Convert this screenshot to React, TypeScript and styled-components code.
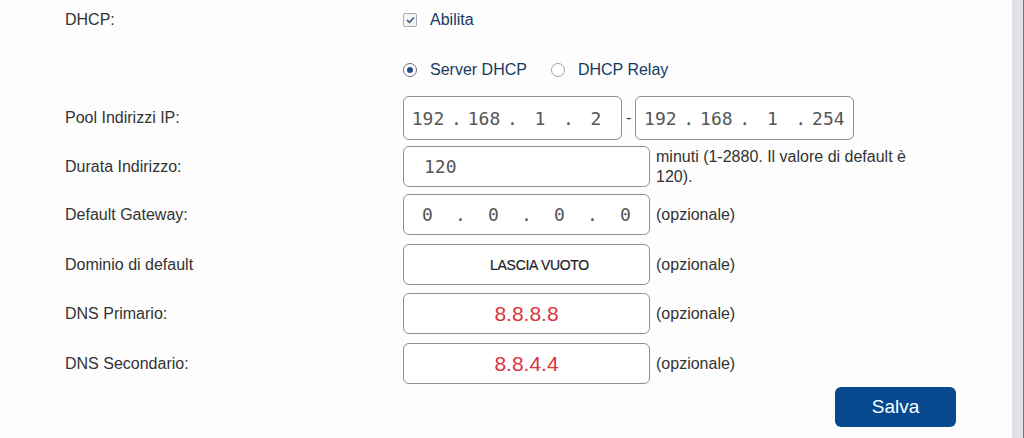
import React from 'react';
import styled, { createGlobalStyle } from 'styled-components';

const GlobalStyle = createGlobalStyle`
  html, body { margin: 0; padding: 0; background: #fdfdfd; }
  body { font-family: "Liberation Sans", Arial, sans-serif; color: #333; }
`;

const Page = styled.div`
  display: flex;
  width: 1024px;
  height: 438px;
  overflow: hidden;
`;

const Content = styled.div`
  flex: 1;
  padding-left: 65px;
`;

const SideStrip = styled.div`
  width: 11px;
  background: #dfe1e5;
  border-right: 1px solid #6b7892;
`;

const Row = styled.div<{ $h: number; $mt?: number }>`
  display: grid;
  grid-template-columns: 338px auto;
  align-items: center;
  height: ${(p) => p.$h}px;
  margin-top: ${(p) => p.$mt ?? 0}px;
`;

const Label = styled.div`
  font-size: 16px;
  color: #333;
`;

const Field = styled.div`
  display: flex;
  align-items: center;
  gap: 6px;
  height: 100%;
`;

const OptionLabel = styled.label`
  display: flex;
  align-items: center;
  gap: 13px;
  font-size: 16px;
  color: #153a63;
  margin-right: 18px;
`;

const CheckBox = styled.span`
  width: 12px;
  height: 12px;
  border: 1px solid #a9adb3;
  border-radius: 2px;
  background: #f4f5f7;
  display: flex;
  align-items: center;
  justify-content: center;
`;

const Radio = styled.span<{ $on?: boolean }>`
  width: 12px;
  height: 12px;
  border: 1px solid ${(p) => (p.$on ? '#6d7178' : '#9da1a7')};
  border-radius: 50%;
  background: #fff;
  display: flex;
  align-items: center;
  justify-content: center;
  &::after {
    content: '';
    display: ${(p) => (p.$on ? 'block' : 'none')};
    width: 6px;
    height: 6px;
    border-radius: 50%;
    background: #1e4f8c;
  }
`;

const Box = styled.div<{ $w: number; $h?: number; $center?: boolean }>`
  box-sizing: border-box;
  width: ${(p) => p.$w}px;
  height: ${(p) => p.$h ?? 41}px;
  border: 1px solid #8c8f94;
  border-radius: 6px;
  background: #fff;
  display: flex;
  align-items: center;
  justify-content: ${(p) => (p.$center ? 'center' : 'flex-start')};
`;

const Mono = styled.span`
  font-family: "DejaVu Sans Mono", monospace;
  font-size: 18px;
  color: #555;
`;

const Seg = styled(Mono)<{ $w: number }>`
  width: ${(p) => p.$w}px;
  text-align: center;
`;

const PlainValue = styled(Mono)`
  padding-left: 20px;
`;

const Placeholder = styled.span`
  font-size: 14px;
  color: #222;
  letter-spacing: -0.3px;
  padding-left: 26px;
  -webkit-text-stroke: 0.2px #222;
`;

const RedValue = styled.span`
  font-size: 21px;
  color: #d8343d;
`;

const Dash = styled.span`
  font-size: 16px;
  color: #333;
  margin: 0 -2px;
`;

const Hint = styled.span`
  font-size: 16px;
  color: #333;
  line-height: 20px;
  align-self: flex-start;
  margin-top: 1px;
`;

const HintMid = styled(Hint)`
  align-self: center;
  margin-top: 0;
`;

const Footer = styled.div`
  display: flex;
  justify-content: flex-end;
  padding-right: 56px;
  margin-top: 3px;
`;

const SaveButton = styled.button`
  width: 121px;
  height: 40px;
  border: none;
  border-radius: 6px;
  background: #07498f;
  color: #fff;
  font-family: "Liberation Sans", Arial, sans-serif;
  font-size: 19px;
  cursor: pointer;
`;

type IpProps = { parts: string[]; w: number; seg: number; dot: number; pad: number };

const IpField: React.FC<IpProps> = ({ parts, w, seg, dot, pad }) => (
  <Box $w={w} $h={44} style={{ paddingLeft: pad }}>
    {parts.map((p, i) => (
      <React.Fragment key={i}>
        {i > 0 && <Seg $w={dot}>.</Seg>}
        <Seg $w={seg}>{p}</Seg>
      </React.Fragment>
    ))}
  </Box>
);

const Check = () => (
  <svg width="9" height="8" viewBox="0 0 9 8">
    <path d="M1 4.2 L3.4 6.3 L8 1.5" fill="none" stroke="#3e5f86" strokeWidth="1.6" />
  </svg>
);

export default function App() {
  return (
    <Page>
      <GlobalStyle />
      <Content>
        <Row $h={40}>
          <Label>DHCP:</Label>
          <Field>
            <OptionLabel>
              <CheckBox>
                <Check />
              </CheckBox>
              Abilita
            </OptionLabel>
          </Field>
        </Row>
        <Row $h={40} $mt={10}>
          <span />
          <Field>
            <OptionLabel>
              <Radio $on />
              Server DHCP
            </OptionLabel>
            <OptionLabel>
              <Radio />
              DHCP Relay
            </OptionLabel>
          </Field>
        </Row>
        <Row $h={44} $mt={6}>
          <Label>Pool Indirizzi IP:</Label>
          <Field>
            <IpField parts={['192', '168', '1', '2']} w={219} seg={46} dot={10} pad={1} />
            <Dash>-</Dash>
            <IpField parts={['192', '168', '1', '254']} w={219} seg={46} dot={10} pad={1} />
          </Field>
        </Row>
        <Row $h={41} $mt={6}>
          <Label>Durata Indirizzo:</Label>
          <Field>
            <Box $w={247}>
              <PlainValue>120</PlainValue>
            </Box>
            <Hint>
              minuti (1-2880. Il valore di default è
              <br />
              120).
            </Hint>
          </Field>
        </Row>
        <Row $h={41} $mt={7}>
          <Label>Default Gateway:</Label>
          <Field>
            <Box $w={247}>
              {['0', '0', '0', '0'].map((p, i) => (
                <React.Fragment key={i}>
                  {i > 0 && <Seg $w={19}>.</Seg>}
                  <Seg $w={47}>{p}</Seg>
                </React.Fragment>
              ))}
            </Box>
            <HintMid>(opzionale)</HintMid>
          </Field>
        </Row>
        <Row $h={41} $mt={9}>
          <Label>Dominio di default</Label>
          <Field>
            <Box $w={247} $center>
              <Placeholder>LASCIA VUOTO</Placeholder>
            </Box>
            <HintMid>(opzionale)</HintMid>
          </Field>
        </Row>
        <Row $h={41} $mt={8}>
          <Label>DNS Primario:</Label>
          <Field>
            <Box $w={247} $center>
              <RedValue>8.8.8.8</RedValue>
            </Box>
            <HintMid>(opzionale)</HintMid>
          </Field>
        </Row>
        <Row $h={41} $mt={9}>
          <Label>DNS Secondario:</Label>
          <Field>
            <Box $w={247} $center>
              <RedValue>8.8.4.4</RedValue>
            </Box>
            <HintMid>(opzionale)</HintMid>
          </Field>
        </Row>
        <Footer>
          <SaveButton>Salva</SaveButton>
        </Footer>
      </Content>
      <SideStrip />
    </Page>
  );
}
